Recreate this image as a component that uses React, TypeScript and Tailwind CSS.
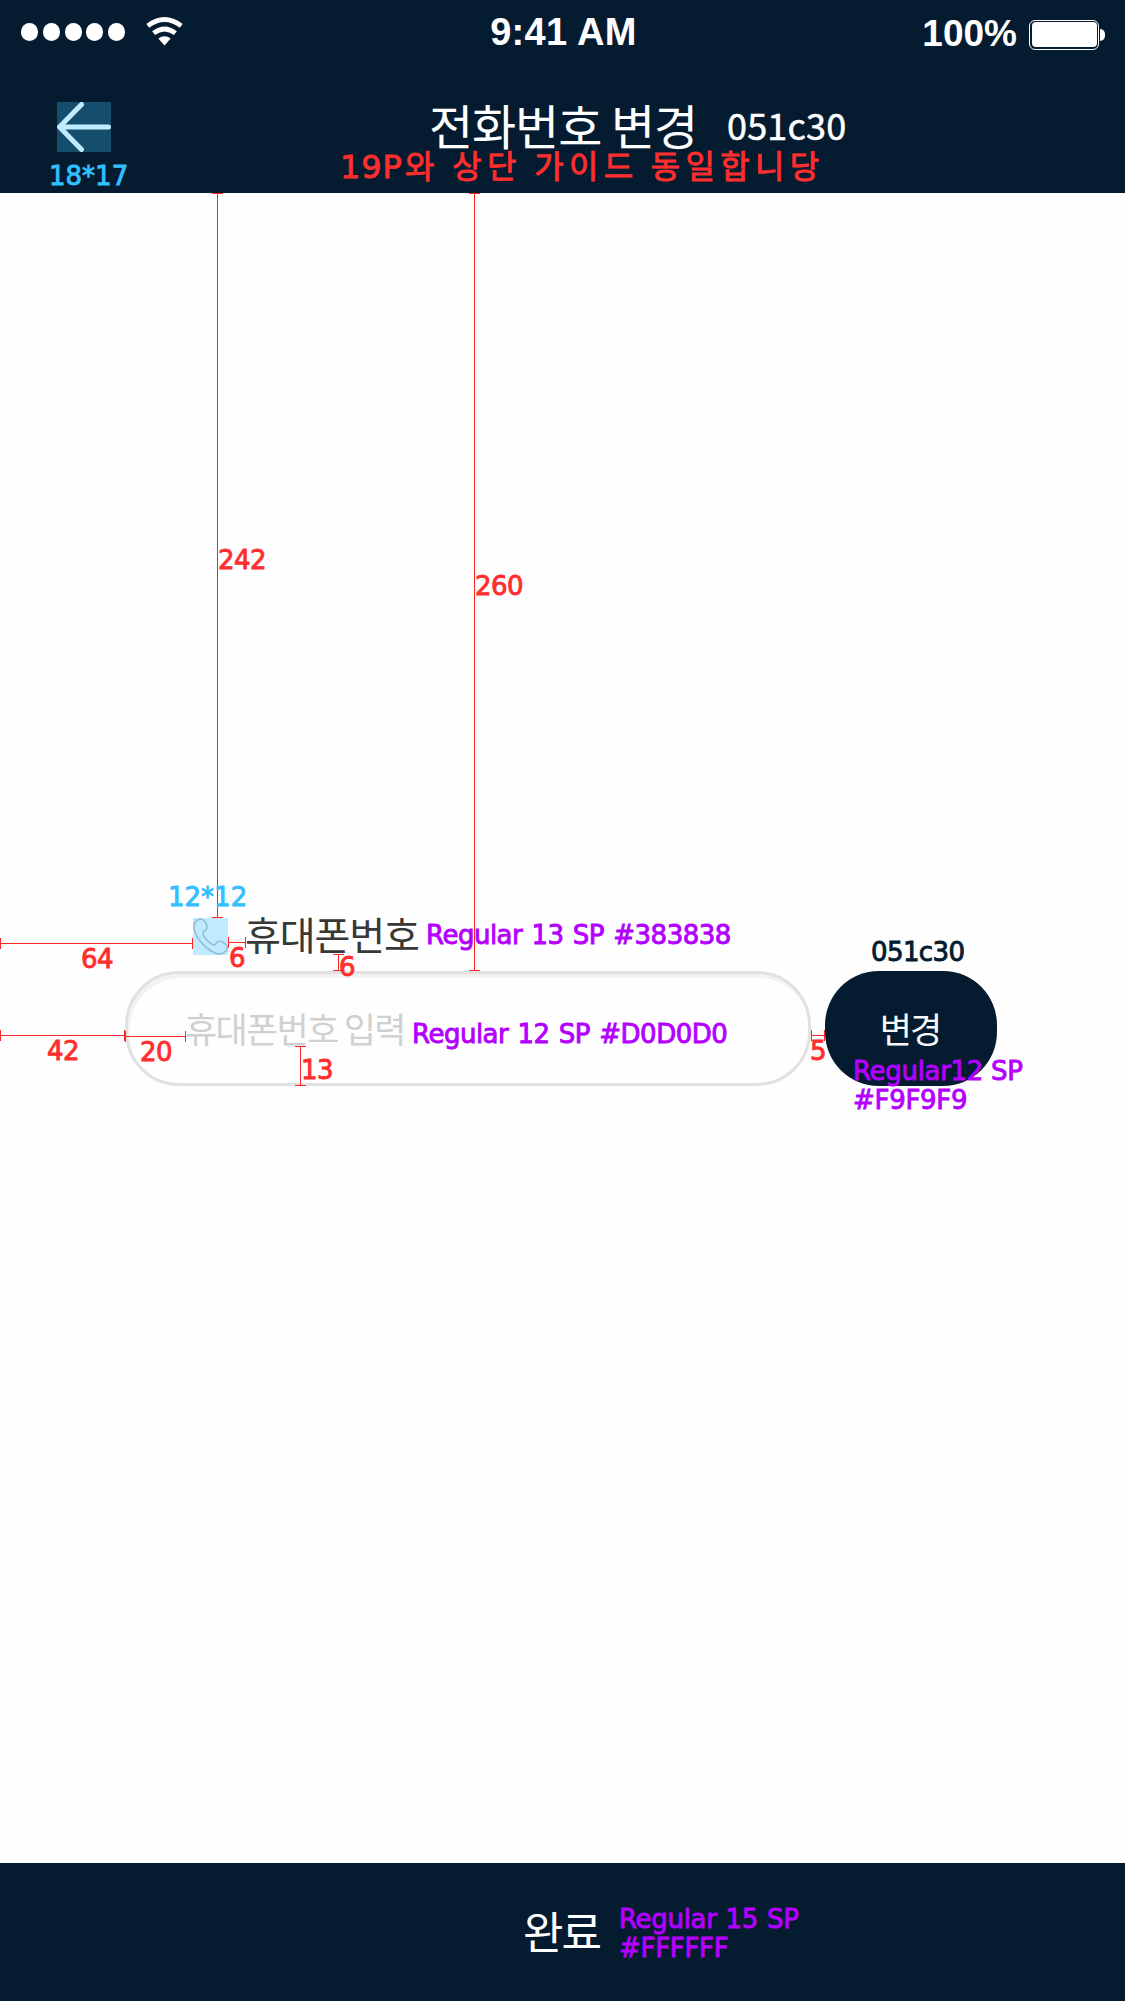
import type { ReactNode } from "react";

const KR = "font-['Noto_Sans_CJK_KR',sans-serif]";

type NoteProps = { className: string; children: ReactNode };

function Note({ className, children }: NoteProps) {
  return (
    <span
      className={`whitespace-pre font-['DejaVu_Sans','Noto_Sans_CJK_KR',sans-serif] text-[26px] [-webkit-text-stroke:0.9px_currentColor] ${className}`}
    >
      {children}
    </span>
  );
}

// Vertical dimension line: 11px wide box, 1px stem in the centre, a cap at each end.
function VRule({ className }: { className: string }) {
  return (
    <div className={`absolute flex w-[11px] justify-center border-y border-[#fb2626] ${className}`}>
      <div className="h-full w-px bg-[#fb2626]" />
    </div>
  );
}

function HRule({ className }: { className: string }) {
  return (
    <div className={`absolute flex h-[11px] items-center border-x border-[#fb2626] ${className}`}>
      <div className="h-px w-full bg-[#fb2626]" />
    </div>
  );
}

function StatusBar() {
  return (
    <div className="flex h-16 items-start pl-[21px] pr-[20px] text-white">
      <div className="mt-[23px] flex gap-[4.8px]">
        {[0, 1, 2, 3, 4].map((i) => (
          <span key={i} className="h-[18px] w-[17px] rounded-full bg-white" />
        ))}
      </div>
      <svg className="ml-[21px] mt-[17px] h-[29px] w-[37px]" viewBox="0 0 37 29" fill="none" stroke="#fff">
        <path d="M1.8 8.8Q18.5 -3.8 35.2 8.8" strokeWidth="4.8" />
        <path d="M7.6 16.2Q18.5 7.8 29.4 16.2" strokeWidth="4.8" />
        <path d="M12.3 21.6Q18.5 17 24.7 21.6L18.5 28.5Z" fill="#fff" stroke="none" />
      </svg>
      <span className="ml-[307px] mt-[13px] whitespace-pre font-['Liberation_Sans',sans-serif] text-[38px] font-bold leading-[38px] tracking-[0.3px]">
        9:41 AM
      </span>
      <div className="ml-auto flex">
        <span className="mt-[15px] font-['Liberation_Sans',sans-serif] text-[37px] font-bold leading-[37px]">
          100%
        </span>
        <div className="ml-[12px] mt-[17px] flex items-center gap-px">
          <div className="h-[30px] w-[70px] rounded-[6px] border-[1.5px] border-white p-[1.5px]">
            <div className="h-full w-full rounded-[4px] bg-white" />
          </div>
          <div className="h-[12px] w-[5px] rounded-r-full bg-white" />
        </div>
      </div>
    </div>
  );
}

export default function App() {
  return (
    <div className="relative flex h-[2001px] w-[1125px] flex-col overflow-hidden bg-[#fefefe]">
      <header className="h-[193px] bg-[#051c30]">
        <StatusBar />
        <div className="flex h-[129px] items-start">
          <div className="flex w-[340px] flex-col items-start gap-[11px] pl-[49px] pt-[38px]">
            <button className="ml-2 h-[50px] w-[54px] bg-[#154e6d]">
              <svg viewBox="0 0 54 50" className="h-[50px] w-[54px]" fill="none" stroke="#c0ebff" strokeWidth="5" strokeLinecap="round" strokeLinejoin="round">
                <path d="M24.5 2.5L2.5 25L24.5 47.5M3 25H51.5" />
              </svg>
            </button>
            <Note className="leading-[26px] text-[#33bfff]">18*17</Note>
          </div>
          <div className="flex flex-col">
            <div className="flex h-[84px] items-start pl-[89px] pt-[30px] text-white">
              <h1 className={`w-[298px] whitespace-pre text-[48px] leading-[60px] tracking-[-1.1px] ${KR}`}>
                전화번호 변경
              </h1>
              <span className={`mt-[12px] text-[36px] leading-[36px] tracking-[0.2px] [-webkit-text-stroke:0.5px_currentColor] ${KR}`}>
                051c30
              </span>
            </div>
            <div className="flex items-start text-[#ff2e2e]">
              <Note className="mt-[3px] w-[65px] text-[32px] leading-[33px] tracking-[0.9px]">19P</Note>
              <span className={`-mt-[2px] whitespace-pre text-[32px] leading-[36px] tracking-[5.3px] [-webkit-text-stroke:0.9px_currentColor] ${KR}`}>
                와 상단 가이드 동일합니당
              </span>
            </div>
          </div>
        </div>
      </header>

      <main className="flex-1 pt-[711px]">
        <div className="flex h-[67px] items-start pl-[193px]">
          <div className="mt-[14px] h-[37px] w-[35px] bg-[#bfeaff]">
            <svg viewBox="0 0 35 37" className="h-[37px] w-[35px]" fill="none" stroke="#93bfd4" strokeWidth="1.6" strokeLinejoin="round">
              <path d="M4 2.4C6.5.8 9.5.9 11.2 2.8C13.5 5.5 14.4 9 13.5 11C12.9 12.4 9.8 13 9.7 15.2C9.6 18.5 17.6 26.6 20.9 26.9C23.1 27 23.6 23.8 25.2 23.3C27.5 22.7 31.6 24.6 33.4 27C34.7 28.8 34.3 31.5 32.6 33.3C30.4 35.6 27.2 36.5 23.4 35.4C13.5 32.3 3.2 20.6 1.2 11.1C.5 7.6 1.2 4.2 4 2.4Z" />
            </svg>
          </div>
          <span className={`ml-[17px] mt-px w-[181px] whitespace-nowrap text-[39px] leading-[56px] tracking-[-1.1px] text-[#383838] ${KR}`}>
            휴대폰번호
          </span>
          <Note className="mt-[18px] leading-[26px] tracking-[-0.5px] [word-spacing:1.5px] text-[#b300ff]">Regular 13 SP #383838</Note>
        </div>
        <div className="flex gap-[14px] pl-[125px]">
          <div className="flex h-[115px] w-[686px] items-center rounded-[54px] border-[3px] border-[#e1e1e1] pl-[57px] shadow-[inset_2px_4px_0_#f2f2f2]">
            <span className={`mb-[2px] w-[227px] whitespace-pre text-[35px] leading-[52px] tracking-[-1.7px] text-[#d0d0d0] ${KR}`}>
              휴대폰번호 입력
            </span>
            <Note className="mt-[11px] leading-[26px] tracking-[-0.5px] [word-spacing:1.5px] text-[#b300ff]">Regular 12 SP #D0D0D0</Note>
          </div>
          <button className={`flex h-[115px] w-[172px] items-center justify-center rounded-[54px] bg-[#051c30] pb-[2px] pr-[2px] text-[35px] leading-[50px] tracking-[-2px] text-[#f9f9f9] ${KR}`}>
            변경
          </button>
        </div>
      </main>

      <footer className="flex h-[138px] items-center bg-[#051c30] pl-[523px]">
        <span className={`mb-[5px] w-[96px] whitespace-nowrap text-[44px] leading-[60px] tracking-[-2px] text-white ${KR}`}>
          완료
        </span>
        <Note className="mt-1 leading-[29px] tracking-[-0.3px] [word-spacing:1px] text-[#b300ff]">{"Regular 15 SP\n#FFFFFF"}</Note>
      </footer>

      <VRule className="left-[212px] top-[193px] h-[725px]" />
      <VRule className="left-[469px] top-[193px] h-[778px]" />
      <VRule className="left-[333px] top-[954px] h-[17px]" />
      <VRule className="left-[295px] top-[1046px] h-[40px]" />
      <HRule className="left-0 top-[938px] w-[193px]" />
      <HRule className="left-[228px] top-[937px] w-[18px]" />
      <HRule className="left-0 top-[1030px] w-[125px]" />
      <HRule className="left-[125px] top-[1031px] w-[61px]" />
      <HRule className="left-[811px] top-[1030px] w-[14px]" />

      <Note className="absolute left-[218px] top-[547px] leading-[26px] tracking-[-0.6px] text-[#ff2e2e]">242</Note>
      <Note className="absolute left-[475px] top-[573px] leading-[26px] tracking-[-0.6px] text-[#ff2e2e]">260</Note>
      <Note className="absolute left-[168px] top-[884px] leading-[26px] text-[#33bfff]">12*12</Note>
      <Note className="absolute left-[81px] top-[946px] leading-[26px] tracking-[-0.6px] text-[#ff2e2e]">64</Note>
      <Note className="absolute left-[229px] top-[945px] leading-[26px] text-[#ff2e2e]">6</Note>
      <Note className="absolute left-[339px] top-[954px] leading-[26px] text-[#ff2e2e]">6</Note>
      <Note className="absolute left-[47px] top-[1038px] leading-[26px] tracking-[-0.6px] text-[#ff2e2e]">42</Note>
      <Note className="absolute left-[140px] top-[1039px] leading-[26px] tracking-[-0.6px] text-[#ff2e2e]">20</Note>
      <Note className="absolute left-[301px] top-[1057px] leading-[26px] tracking-[-0.6px] text-[#ff2e2e]">13</Note>
      <Note className="absolute left-[810px] top-[1038px] leading-[26px] text-[#ff2e2e]">5</Note>
      <Note className="absolute left-[871px] top-[939px] leading-[26px] tracking-[-0.6px] text-[#051c30]">051c30</Note>
      <Note className="absolute left-[853px] top-[1057px] leading-[29px] tracking-[-0.3px] text-[#b300ff]">{"Regular12 SP\n#F9F9F9"}</Note>
    </div>
  );
}
